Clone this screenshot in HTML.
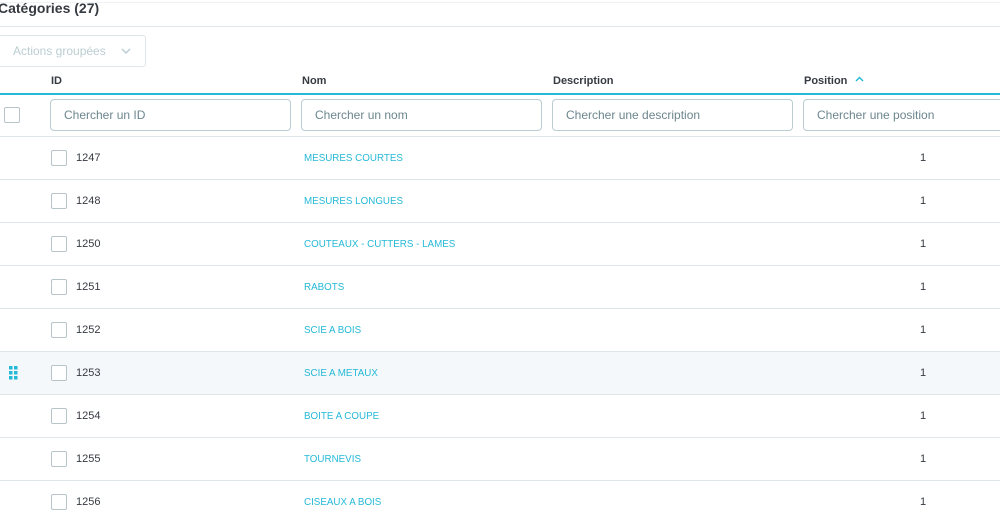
<!DOCTYPE html>
<html><head><meta charset="utf-8"><style>
*{box-sizing:border-box;margin:0;padding:0}
body{width:1000px;height:523px;overflow:hidden;background:#fff;font-family:"Liberation Sans",sans-serif;color:#363a41;position:relative}
.a{position:absolute}
.title{left:-2px;top:0;font-size:14px;font-weight:bold;color:#363a41;line-height:16px}
.hl{left:0;width:1000px;height:1px;background:#dfe6ea}
.btn{left:-2px;top:35px;width:148px;height:32px;border:1px solid #dfe6ea;border-radius:3px;font-size:12px;color:#bbcdd2;padding:8px 0 0 14px}
.th{top:75px;font-size:11px;font-weight:bold;color:#363a41}
.inp{top:99px;height:32px;border:1px solid #bbcdd2;border-radius:4px;font-size:12px;color:#6c868e;padding:8px 0 0 13px}
.cb{width:16px;height:16px;border:1.5px solid #b7c4c9;border-radius:2px;background:#fff}
.id{left:76px;font-size:11px;color:#363a41}
.nm{left:304px;font-size:9.8px;color:#25b9d7}
.ps{left:920px;font-size:11px;color:#363a41}
</style></head><body>
<div class="a hl" style="top:2px;background:#eef2f4"></div>
<div class="a title">Catégories (27)</div>
<div class="a hl" style="top:26px"></div>
<div class="a btn">Actions groupées<svg class="a" style="left:122px;top:12px" width="10" height="7" viewBox="0 0 10 7"><path d="M1 1l4 4 4-4" fill="none" stroke="#bbcdd2" stroke-width="1.5"/></svg></div>
<div class="a th" style="left:51px">ID</div>
<div class="a th" style="left:302px">Nom</div>
<div class="a th" style="left:553px">Description</div>
<div class="a th" style="left:804px">Position</div>
<svg class="a" style="left:855px;top:76px" width="9" height="6" viewBox="0 0 9 6"><path d="M1 5l3.5-3.5L8 5" fill="none" stroke="#25b9d7" stroke-width="1.5"/></svg>
<div class="a hl" style="top:93px;height:2px;background:#25b9d7"></div>
<div class="a cb" style="left:4px;top:107px"></div>
<div class="a inp" style="left:50px;width:241px">Chercher un ID</div>
<div class="a inp" style="left:301px;width:241px">Chercher un nom</div>
<div class="a inp" style="left:552px;width:241px">Chercher une description</div>
<div class="a inp" style="left:803px;width:210px">Chercher une position</div>
<div class="a hl" style="top:136px"></div>
<div class="a" style="left:0;top:352px;width:1000px;height:42px;background:#f4f8fa"></div>
<svg class="a" style="left:9px;top:366px" width="10" height="14"><g fill="#25b9d7"><rect x="0" y="0" width="3.5" height="3.5"/><rect x="5" y="0" width="3.5" height="3.5"/><rect x="0" y="5" width="3.5" height="3.5"/><rect x="5" y="5" width="3.5" height="3.5"/><rect x="0" y="10" width="3.5" height="3.5"/><rect x="5" y="10" width="3.5" height="3.5"/></g></svg>
<div id="rows"></div>
<script>
var d=[["1247","MESURES COURTES"],["1248","MESURES LONGUES"],["1250","COUTEAUX - CUTTERS - LAMES"],["1251","RABOTS"],["1252","SCIE A BOIS"],["1253","SCIE A METAUX"],["1254","BOITE A COUPE"],["1255","TOURNEVIS"],["1256","CISEAUX A BOIS"]];
var h="";d.forEach(function(r,i){var c=158+43*i;
h+='<div class="a cb" style="left:51px;top:'+(c-8)+'px"></div><div class="a id" style="top:'+(c-6)+'px">'+r[0]+'</div><div class="a nm" style="top:'+(c-5)+'px">'+r[1]+'</div><div class="a ps" style="top:'+(c-6)+'px">1</div>';
if(i<8)h+='<div class="a hl" style="top:'+(c+21)+'px"></div>';});
document.getElementById("rows").innerHTML=h;
</script>
</body></html>
